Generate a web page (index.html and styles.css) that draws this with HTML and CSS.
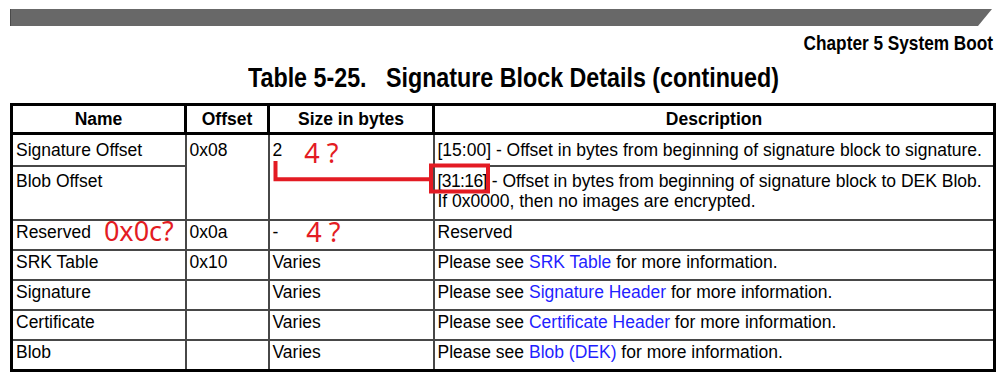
FILE: index.html
```
<!DOCTYPE html>
<html>
<head>
<meta charset="utf-8">
<link rel="stylesheet" href="styles.css">
</head>
<body>
<div class="page">
  <div class="topbar"></div>
  <div class="chapter"><span class="narrow narrow-r">Chapter 5 System Boot</span></div>
  <div class="title"><span class="narrow">Table 5-25.&nbsp;&nbsp; Signature Block Details (continued)</span></div>
  <table class="tbl">
    <colgroup>
      <col class="c1"><col class="c2"><col class="c3"><col class="c4">
    </colgroup>
    <thead>
      <tr class="hrow">
        <th>Name</th><th>Offset</th><th>Size in bytes</th><th>Description</th>
      </tr>
    </thead>
    <tbody>
      <tr class="r1">
        <td>Signature Offset</td>
        <td rowspan="2">0x08</td>
        <td rowspan="2">2<span class="note n-four">4 ?</span></td>
        <td>[15:00] - Offset in bytes from beginning of signature block to signature.</td>
      </tr>
      <tr class="r2">
        <td>Blob Offset</td>
        <td><span class="bits">[31:16]</span> - Offset in bytes from beginning of signature block to DEK Blob.<br>If 0x0000, then no images are encrypted.</td>
      </tr>
      <tr class="r">
        <td>Reserved<span class="note n-off">0x0c?</span></td>
        <td>0x0a</td>
        <td>-<span class="note n-four2">4 ?</span></td>
        <td>Reserved</td>
      </tr>
      <tr class="r">
        <td>SRK Table</td><td>0x10</td><td>Varies</td>
        <td>Please see <span class="link">SRK Table</span> for more information.</td>
      </tr>
      <tr class="r">
        <td>Signature</td><td></td><td>Varies</td>
        <td>Please see <span class="link">Signature Header</span> for more information.</td>
      </tr>
      <tr class="r">
        <td>Certificate</td><td></td><td>Varies</td>
        <td>Please see <span class="link">Certificate Header</span> for more information.</td>
      </tr>
      <tr class="r">
        <td>Blob</td><td></td><td>Varies</td>
        <td>Please see <span class="link">Blob (DEK)</span> for more information.</td>
      </tr>
    </tbody>
  </table>
  <svg class="marks" width="999" height="378" viewBox="0 0 999 378">
    <path d="M275.5 161 V179.3 H431" fill="none" stroke="#e31b23" stroke-width="4"/>
    <rect x="431" y="165.5" width="57" height="26" fill="none" stroke="#e31b23" stroke-width="4"/>
  </svg>
</div>
</body>
</html>
```
FILE: styles.css
```
html, body {
  margin: 0;
  padding: 0;
  background: #fff;
}
.page {
  position: relative;
  width: 999px;
  height: 378px;
  overflow: hidden;
  font-family: "Liberation Sans", Arial, sans-serif;
  color: #000;
}
.topbar {
  margin: 9px 0 0 10px;
  width: 982px;
  height: 17px;
  background: #686868;
  border-left: 1px solid #4a4a4a;
  box-sizing: border-box;
  clip-path: polygon(0 0, 100% 0, calc(100% - 14px) 100%, 0 100%);
}
.narrow {
  display: inline-block;
  transform: scaleX(0.82);
  transform-origin: left center;
  white-space: pre;
}
.narrow-r {
  transform-origin: right center;
}
.title .narrow {
  transform: scaleX(0.831);
}
.chapter {
  margin-top: 6px;
  padding-right: 6px;
  text-align: right;
  font-weight: bold;
  font-size: 21px;
  line-height: 22px;
}
.title {
  margin-top: 9px;
  padding-left: 248px;
  font-weight: bold;
  font-size: 28px;
  line-height: 30px;
}
.tbl {
  margin: 10px 0 0 10px;
  width: 983px;
  border-collapse: collapse;
  border: 3px solid #000;
  table-layout: fixed;
  font-size: 17.5px;
  line-height: 20px;
}
.c1 { width: 174px; }
.c2 { width: 83px; }
.c3 { width: 165px; }
.c4 { width: 561px; }
.tbl th {
  border: 3px solid #000;
  font-weight: bold;
  text-align: center;
  height: 26px;
  padding: 0 3px;
  vertical-align: middle;
}
.tbl td {
  border: 2px solid #474747;
  padding: 4px 3px 0 3px;
  vertical-align: top;
  text-align: left;
  white-space: nowrap;
}
.r1 td { height: 25px; padding-top: 5px; }
.r2 td { height: 48px; }
.r td { height: 27px; padding-top: 1px; }
.bits { letter-spacing: -0.6px; }
.link { color: #1f1fff; }
.note {
  font-family: "Noto Sans", "DejaVu Sans", sans-serif;
  color: #e31b23;
  font-size: 27px;
  line-height: 0;
  position: relative;
}
.n-four { margin-left: 22px; top: 7px; }
.n-four2 { margin-left: 28px; top: 4px; }
.n-off { margin-left: 13px; top: 3px; }
.marks {
  position: absolute;
  top: 0;
  left: 0;
  pointer-events: none;
}
```
